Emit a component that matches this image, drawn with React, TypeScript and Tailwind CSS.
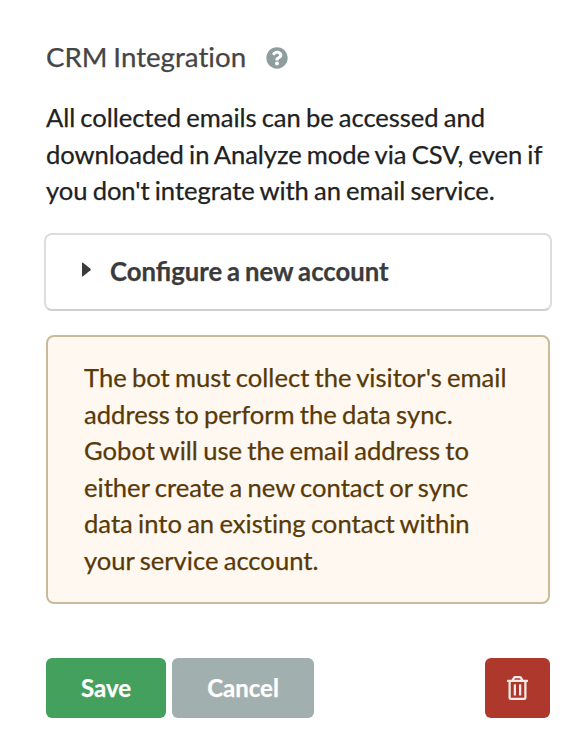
const DESCRIPTION = [
  "All collected emails can be accessed and",
  "downloaded in Analyze mode via CSV, even if",
  "you don't integrate with an email service.",
];

const WARNING = [
  "The bot must collect the visitor's email",
  "address to perform the data sync.",
  "Gobot will use the email address to",
  "either create a new contact or sync",
  "data into an existing contact within",
  "your service account.",
];

function HelpIcon() {
  return (
    <svg viewBox="0 0 512 512" className="mt-0.5 h-[22px] w-[22px]" fill="#8f9d9d">
      <path d="M504 256c0 137-111 248-248 248S8 393 8 256C8 119.100 119 8 256 8s248 111.100 248 248zM262.700 90c-54.500 0-89.300 23-116.500 63.800-3.500 5.300-2.400 12.400 2.700 16.300l34.700 26.300c5.200 3.900 12.600 3 16.700-2.100 17.900-22.700 30.100-35.800 57.300-35.800 20.400 0 45.700 13.100 45.700 33 0 15-12.400 22.700-32.500 34C247.100 238.500 216 255 216 296v4c0 6.600 5.400 12 12 12h56c6.600 0 12-5.400 12-12v-1.300c0-28.800 84.200-30 84.200-108 0-58.700-60.900-100.700-117.500-100.700zM256 338c-25.400 0-46 20.600-46 46s20.600 46 46 46 46-20.600 46-46-20.600-46-46-46z" />
    </svg>
  );
}

function TrashIcon() {
  return (
    <svg viewBox="0 0 448 512" className="h-6 w-[21px]" fill="#fff" opacity={0.9}>
      <path d="M268 416h24a12 12 0 0012-12V188a12 12 0 00-12-12h-24a12 12 0 00-12 12v216a12 12 0 0012 12zM432 80h-82.400l-34-56.700A48 48 0 00274.400 0H173.600a48 48 0 00-41.200 23.300L98.400 80H16A16 16 0 000 96v16a16 16 0 0016 16h16v336a48 48 0 0048 48h288a48 48 0 0048-48V128h16a16 16 0 0016-16V96a16 16 0 00-16-16zM171.800 50.900a6 6 0 015.200-2.900h94a6 6 0 015.200 2.900L293.600 80H154.400zM368 464H80V128h288zm-212-48h24a12 12 0 0012-12V188a12 12 0 00-12-12h-24a12 12 0 00-12 12v216a12 12 0 0012 12z" />
    </svg>
  );
}

export default function App() {
  return (
    <div className="min-h-screen bg-white px-[46px] pt-[39px] font-['Lato',sans-serif] text-[25.600px] leading-[36.500px] whitespace-nowrap text-[#212121] [-webkit-text-stroke:0.25px_currentColor] [word-spacing:-1.300px]">
      <header className="flex h-9 items-center gap-5">
        <h1 className="text-[27.700px] text-[#454545] [font-variant-ligatures:none]">CRM Integration</h1>
        <HelpIcon />
      </header>

      <p className="mt-6 tracking-[-0.060px]">
        {DESCRIPTION.map((line) => (
          <span key={line} className="block">{line}</span>
        ))}
      </p>

      <button className="mt-[24px] -ml-0.5 flex h-[78px] w-[508px] items-center rounded-lg border-2 border-[#dcdddd] border-b-[#cfcfcf] pl-9 text-[25.700px] font-bold text-[#3b3b3b] [word-spacing:-1.300px]">
        <svg viewBox="0 0 9 15" className="mr-[19px] mb-1 h-[15px] w-[9px]" fill="#3b3b3b">
          <path d="M0 1Q0 0 1 .7L8.500 6.800Q9 7.500 8.500 8.200L1 14.300Q0 15 0 14z" />
        </svg>
        Configure a new account
      </button>

      <div className="mt-6 h-[269px] w-[504px] rounded-lg border-2 border-[#c9ba9b] bg-[#fff8f1] px-9 pt-[22.500px] text-[#573a08] [font-variant-ligatures:none]">
        {WARNING.map((line) => (
          <p key={line}>{line}</p>
        ))}
      </div>

      <footer className="mt-[54px] flex h-[60px] w-[504px] gap-1.5 text-[24px] font-bold text-white">
        <button className="w-[120px] rounded-md bg-[#44a15d] pt-0.5">Save</button>
        <button className="w-[142px] rounded-md bg-[#a2afaf] pt-0.5">Cancel</button>
        <button aria-label="Delete" className="ml-auto flex w-[65px] items-center justify-center rounded-md bg-[#ad382b]">
          <TrashIcon />
        </button>
      </footer>
    </div>
  );
}
